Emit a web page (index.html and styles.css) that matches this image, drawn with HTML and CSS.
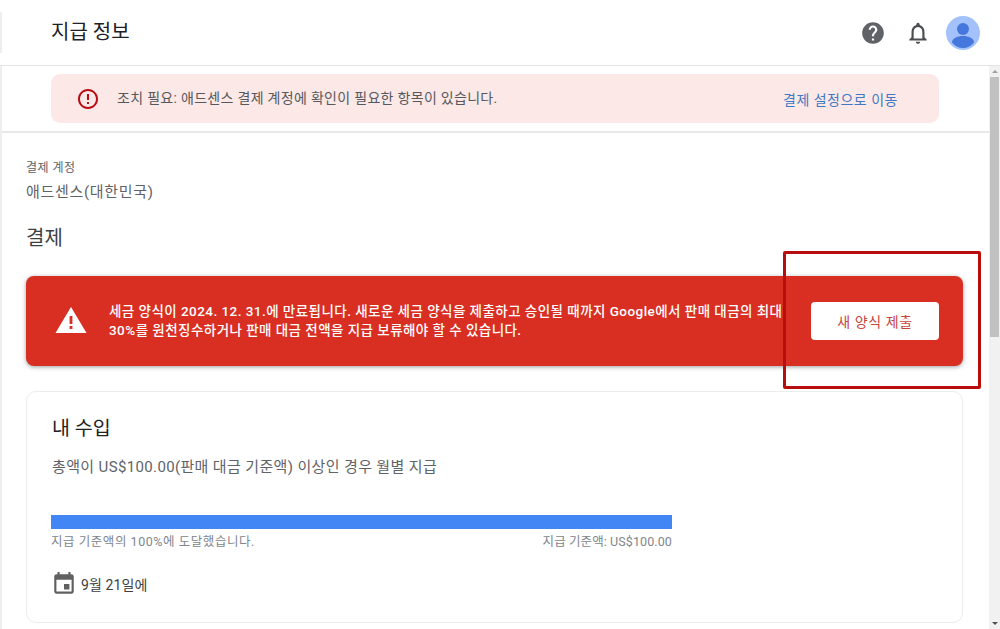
FILE: index.html
```html
<!DOCTYPE html>
<html lang="ko">
<head>
  <meta charset="UTF-8" />
  <meta name="viewport" content="width=device-width, initial-scale=1.0"/>
  <title>지급 정보</title>
  <link rel="stylesheet" href="styles.css">
</head>
<body>

<div class="page">
  <header class="top-bar">
    <h1 class="page-title">지급 정보</h1>
    <div class="top-icons">
      <svg class="icon-help" viewBox="0 0 24 24" width="26" height="26">
        <path fill="#5f6368" d="M12 2C6.48 2 2 6.48 2 12s4.48 10 10 10 10-4.48 10-10S17.52 2 12 2zm1 17h-2v-2h2v2zm2.07-7.75l-.9.92C13.45 12.9 13 13.5 13 15h-2v-.5c0-1.1.45-2.1 1.17-2.83l1.24-1.26c.37-.36.59-.86.59-1.41 0-1.1-.9-2-2-2s-2 .9-2 2H8c0-2.21 1.79-4 4-4s4 1.79 4 4c0 .88-.36 1.68-.93 2.25z"/>
      </svg>
      <svg class="icon-bell" viewBox="0 0 24 24" width="26" height="26">
        <path fill="#4a4d51" d="M12 22c1.1 0 2-.9 2-2h-4c0 1.1.9 2 2 2zm6-6v-5c0-3.07-1.63-5.64-4.5-6.32V4c0-.83-.67-1.5-1.5-1.5s-1.5.67-1.5 1.5v.68C7.64 5.36 6 7.92 6 11v5l-2 2v1h16v-1l-2-2zm-2 1H8v-6c0-2.48 1.51-4.5 4-4.5s4 2.02 4 4.5v6z"/>
      </svg>
      <svg class="avatar" viewBox="0 0 34 34" width="34" height="34">
        <circle cx="17" cy="17" r="17" fill="#a3c1fb"/>
        <circle cx="17" cy="13" r="6" fill="#4577dc"/>
        <path fill="#4577dc" d="M6 26.5c0-4 5-6.500 11-6.500s11 2.500 11 6.500c-2.600 3.500-6.600 5.500-11 5.500s-8.400-2-11-5.500z"/>
      </svg>
    </div>
  </header>

  <div class="body-row">
    <main class="content">
      <div class="notice-wrap">
        <div class="notice">
          <div class="notice-msg">
            <svg viewBox="0 0 24 24" width="24" height="24">
              <path fill="#b80d14" d="M11 15h2v2h-2zm0-8h2v6h-2zm1-5C6.470 2 2 6.480 2 12s4.470 10 10 10 10-4.480 10-10S17.520 2 12 2zm0 18c-4.420 0-8-3.580-8-8s3.580-8 8-8 8 3.580 8 8-3.580 8-8 8z"/>
            </svg>
            <span class="notice-text">조치 필요: 애드센스 결제 계정에 확인이 필요한 항목이 있습니다.</span>
          </div>
          <a class="notice-link">결제 설정으로 이동</a>
        </div>
      </div>

      <div class="account">
        <div class="account-label">결제 계정</div>
        <div class="account-name">애드센스(대한민국)</div>
      </div>

      <h2 class="section-title">결제</h2>

      <div class="tax-banner">
        <svg class="warn-icon" viewBox="0 0 32 28" width="32" height="28">
          <path fill="#fff" d="M16 1 31.500 27H.5z"/>
          <rect x="14.600" y="10" width="2.800" height="8" fill="#d92f23"/>
          <rect x="14.600" y="20" width="2.800" height="3" fill="#d92f23"/>
        </svg>
        <p class="tax-text">세금 양식이 2024. 12. 31.에 만료됩니다. 새로운 세금 양식을 제출하고 승인될 때까지 Google에서 판매 대금의 최대 30%를 원천징수하거나 판매 대금 전액을 지급 보류해야 할 수 있습니다.</p>
        <button class="tax-btn">새 양식 제출</button>
      </div>

      <section class="earnings">
        <h3 class="earnings-title">내 수입</h3>
        <p class="earnings-desc">총액이 US$100.00(판매 대금 기준액) 이상인 경우 월별 지급</p>
        <div class="progress-box">
          <div class="progress-bar"></div>
          <div class="progress-labels">
            <span class="label-reached">지급 기준액의 100%에 도달했습니다.</span>
            <span>지급 기준액: US$100.00</span>
          </div>
        </div>
        <div class="pay-date">
          <svg viewBox="0 0 24 24" width="26" height="26">
            <path fill="#616161" d="M17 12h-5v5h5v-5zM16 1v2H8V1H6v2H5c-1.110 0-2 .9-2 2v14c0 1.100.89 2 2 2h14c1.100 0 2-.9 2-2V5c0-1.100-.9-2-2-2h-1V1h-2zm3 18H5V8h14v11z"/>
          </svg>
          <span>9월 21일에</span>
        </div>
      </section>
    </main>

    <div class="scrollbar">
      <div class="scroll-arrow up"></div>
      <div class="scroll-track"><div class="scroll-thumb"></div></div>
      <div class="scroll-arrow down"></div>
    </div>
  </div>

  <div class="highlight-box"></div>
</div>

</body>
</html>
```

FILE: styles.css
```css
* {
  box-sizing: border-box;
}

body {
  margin: 0;
  background: white;
  color: #202124;
  font-family: Roboto, "Noto Sans CJK KR", sans-serif;
}

.page {
  position: relative;
  width: 1000px;
  height: 629px;
  overflow: hidden;
  display: flex;
  flex-direction: column;
}

.top-bar {
  position: relative;
  height: 66px;
  flex: none;
  display: flex;
  justify-content: space-between;
  align-items: center;
  padding: 0 20px 0 51px;
  border-bottom: 1px solid #e4e4e4;
}

/* sliver of the collapsed side nav */
.top-bar::before {
  content: "";
  position: absolute;
  left: 0;
  top: 12px;
  width: 2px;
  height: 41px;
  background: #eeeeee;
}

.page-title {
  margin: 0 0 4px;
  font-size: 20px;
  font-weight: 400;
}

.top-icons {
  display: flex;
  align-items: center;
}

.icon-help {
  margin-right: 19px;
}

.icon-bell {
  margin-right: 15px;
}

.body-row {
  flex: 1;
  display: flex;
  min-height: 0;
}

.content {
  flex: 1;
  min-width: 0;
  border-left: 2px solid #eeeeee;
  padding: 0 26px 0 24px;
}

.notice-wrap {
  margin: 0 -26px 0 -24px;
  padding: 8px 50px 8px 49px;
  height: 67px;
  border-bottom: 2px solid #e8e8e8;
}

.notice {
  height: 49px;
  background: #fce8e6;
  border-radius: 9px;
  display: flex;
  justify-content: space-between;
  align-items: center;
  padding: 0 41px 0 25px;
  font-size: 14px;
}

.notice-msg {
  display: flex;
  align-items: center;
  gap: 17px;
  color: #55585c;
}

.notice-text {
  padding-bottom: 3px;
  letter-spacing: 0.3px;
}

.notice-link {
  color: #3f78c4;
  letter-spacing: 0.5px;
}

.account {
  margin-top: 27px;
}

.account-label {
  font-size: 12px;
  line-height: 16px;
  color: #5f6368;
  letter-spacing: 0.5px;
}

.account-name {
  margin-top: 6px;
  font-size: 15px;
  line-height: 20px;
  color: #5f6368;
  letter-spacing: 0.7px;
}

.section-title {
  margin: 22px 0 0;
  font-size: 20px;
  line-height: 28px;
  font-weight: 400;
  color: #3c4043;
}

.tax-banner {
  margin-top: 24px;
  height: 90px;
  background: #d92f23;
  border-radius: 8px;
  box-shadow: 0 1px 4px rgba(60, 64, 67, 0.5);
  display: flex;
  align-items: center;
  padding: 0 24px 0 29px;
  color: white;
}

.warn-icon {
  flex: none;
  margin-bottom: 2px;
}

.tax-text {
  margin: 0 0 0 22px;
  width: 680px;
  flex: none;
  font-size: 13.500px;
  line-height: 19px;
  font-weight: 500;
  letter-spacing: 0.45px;
}

.tax-btn {
  margin-left: auto;
  width: 128px;
  height: 38px;
  background: white;
  border: none;
  border-radius: 4px;
  color: #c8453c;
  font-family: inherit;
  font-size: 14px;
  letter-spacing: 0.6px;
}

.earnings {
  margin-top: 25px;
  height: 232px;
  border: 1px solid #ececec;
  border-radius: 10px;
  padding: 23px 24px 0;
}

.earnings-title {
  margin: 0 0 0 1px;
  font-size: 19.500px;
  line-height: 28px;
  font-weight: 400;
}

.earnings-desc {
  margin: 14px 0 0 1px;
  font-size: 15px;
  line-height: 20px;
  color: #5f6368;
  letter-spacing: 0.36px;
}

.progress-box {
  margin-top: 38px;
  width: 621px;
}

.progress-bar {
  height: 14px;
  background: #4285f4;
}

.progress-labels {
  display: flex;
  justify-content: space-between;
  margin-top: 4px;
  font-size: 12.500px;
  line-height: 18px;
  color: #80868b;
  letter-spacing: 0.1px;
}

.label-reached {
  letter-spacing: 0.55px;
}

.pay-date {
  margin-top: 20px;
  display: flex;
  align-items: center;
  gap: 4px;
  font-size: 14px;
  color: #3c4043;
  letter-spacing: 0.1px;
}

.scrollbar {
  width: 11px;
  flex: none;
  background: #f1f1f1;
  display: flex;
  flex-direction: column;
}

.scroll-arrow {
  height: 11px;
  flex: none;
  position: relative;
}

.scroll-arrow::after {
  content: "";
  position: absolute;
  left: 3px;
  top: 4px;
  border-left: 3px solid transparent;
  border-right: 3px solid transparent;
}

.scroll-arrow.up::after {
  border-bottom: 3px solid #a0a0a0;
}

.scroll-arrow.down::after {
  border-top: 3px solid #505050;
}

.scroll-track {
  flex: 1;
}

.scroll-thumb {
  height: 260px;
  margin: 0 1px 0 1px;
  background: #c1c1c1;
}

/* red annotation drawn over the screenshot */
.highlight-box {
  position: absolute;
  left: 783px;
  top: 251px;
  width: 198px;
  height: 138px;
  border: 3px solid #b80d0d;
  border-radius: 2px;
}
```
